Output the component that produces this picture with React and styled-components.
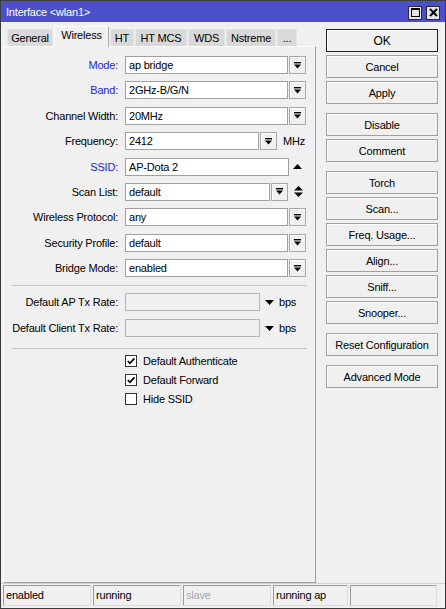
import styled, { createGlobalStyle } from 'styled-components'

const Global = createGlobalStyle`
  html, body { margin: 0; padding: 0; background: #fff; }
  body {
    font-family: 'Liberation Sans', Arial, sans-serif;
    font-size: 11px;
    letter-spacing: -0.2px;
    color: #000;
  }
  * { box-sizing: border-box; }
`

const tabs = [
  { name: 'General', w: 46 },
  { name: 'Wireless', w: 55, active: true },
  { name: 'HT', w: 24 },
  { name: 'HT MCS', w: 52 },
  { name: 'WDS', w: 37 },
  { name: 'Nstreme', w: 50 },
  { name: '...', w: 20 },
]

const buttonGroups = [
  ['OK', 'Cancel', 'Apply'],
  ['Disable', 'Comment'],
  ['Torch', 'Scan...', 'Freq. Usage...', 'Align...', 'Sniff...', 'Snooper...'],
  ['Reset Configuration'],
  ['Advanced Mode'],
]

const DropIcon = () => (
  <svg width="7" height="7" viewBox="0 0 7 7">
    <rect x="0" y="0" width="7" height="1.4" fill="#000" />
    <polygon points="0,2.6 7,2.6 3.5,6.6" fill="#000" />
  </svg>
)

const UpIcon = () => (
  <svg width="9" height="5" viewBox="0 0 9 5">
    <polygon points="0,5 9,5 4.5,0" fill="#000" />
  </svg>
)

const UpDownIcon = () => (
  <svg width="9" height="11" viewBox="0 0 9 11">
    <polygon points="0,4.5 9,4.5 4.5,0" fill="#000" />
    <polygon points="0,6.5 9,6.5 4.5,11" fill="#000" />
  </svg>
)

const DownIcon = () => (
  <svg width="9" height="5" viewBox="0 0 9 5">
    <polygon points="0,0 9,0 4.5,5" fill="#000" />
  </svg>
)

const CheckMark = () => (
  <svg width="10" height="10" viewBox="0 0 10 10">
    <path d="M1.8 5 L4 7.3 L8.4 2.4" stroke="#000" strokeWidth="1.7" fill="none" />
  </svg>
)

const App = () => {
  return (
    <>
      <Global />
      <Window>
        <TitleBar>
          <span>Interface &lt;wlan1&gt;</span>
          <TitleButtons>
            <TitleBtn>
              <svg width="9" height="9" viewBox="0 0 9 9">
                <rect x="0.5" y="0.5" width="8" height="8" fill="none" stroke="#000" />
                <rect x="0" y="0" width="9" height="2" fill="#000" />
              </svg>
            </TitleBtn>
            <TitleBtn>
              <svg width="9" height="9" viewBox="0 0 9 9">
                <path d="M1 1 L8 8 M8 1 L1 8" stroke="#000" strokeWidth="2" />
              </svg>
            </TitleBtn>
          </TitleButtons>
        </TitleBar>

        <Body>
          <LeftCol>
            <TabRow>
              {tabs.map(t => (
                <Tab key={t.name} $w={t.w} $active={t.active}>{t.name}</Tab>
              ))}
            </TabRow>
            <Panel>
              <Rows>
                <Row>
                  <Label $blue>Mode:</Label>
                  <Field $w={163}>ap bridge</Field>
                  <DropBtn><DropIcon /></DropBtn>
                </Row>
                <Row>
                  <Label $blue>Band:</Label>
                  <Field $w={163}>2GHz-B/G/N</Field>
                  <DropBtn><DropIcon /></DropBtn>
                </Row>
                <Row>
                  <Label>Channel Width:</Label>
                  <Field $w={163}>20MHz</Field>
                  <DropBtn><DropIcon /></DropBtn>
                </Row>
                <Row>
                  <Label>Frequency:</Label>
                  <Field $w={134}>2412</Field>
                  <DropBtn><DropIcon /></DropBtn>
                  <Unit $ml={6}>MHz</Unit>
                </Row>
                <Row>
                  <Label $blue>SSID:</Label>
                  <Field $w={164}>AP-Dota 2</Field>
                  <Side><UpIcon /></Side>
                </Row>
                <Row>
                  <Label>Scan List:</Label>
                  <Field $w={145}>default</Field>
                  <DropBtn><DropIcon /></DropBtn>
                  <Side $ml={2}><UpDownIcon /></Side>
                </Row>
                <Row>
                  <Label>Wireless Protocol:</Label>
                  <Field $w={163}>any</Field>
                  <DropBtn><DropIcon /></DropBtn>
                </Row>
                <Row>
                  <Label>Security Profile:</Label>
                  <Field $w={163}>default</Field>
                  <DropBtn><DropIcon /></DropBtn>
                </Row>
                <Row>
                  <Label>Bridge Mode:</Label>
                  <Field $w={163}>enabled</Field>
                  <DropBtn><DropIcon /></DropBtn>
                </Row>
              </Rows>

              <Separator $top={8} $bottom={7} />

              <Rows $gap={8}>
                <Row>
                  <Label>Default AP Tx Rate:</Label>
                  <Field $w={135} $disabled />
                  <Side $w={18}><DownIcon /></Side>
                  <Unit $ml={1}>bps</Unit>
                </Row>
                <Row>
                  <Label>Default Client Tx Rate:</Label>
                  <Field $w={135} $disabled />
                  <Side $w={18}><DownIcon /></Side>
                  <Unit $ml={1}>bps</Unit>
                </Row>
              </Rows>

              <Separator $top={11} $bottom={2} />

              <CheckRow>
                <Box><CheckMark /></Box>Default Authenticate
              </CheckRow>
              <CheckRow>
                <Box><CheckMark /></Box>Default Forward
              </CheckRow>
              <CheckRow>
                <Box />Hide SSID
              </CheckRow>
            </Panel>
          </LeftCol>

          <RightCol>
            {buttonGroups.map((g, i) => (
              <ButtonGroup key={i}>
                {g.map(b => (
                  <Button key={b} $default={b === 'OK'}>{b}</Button>
                ))}
              </ButtonGroup>
            ))}
          </RightCol>
        </Body>

        <StatusBar>
          <Cell $w={88}>enabled</Cell>
          <Cell $w={88}>running</Cell>
          <Cell $w={88} $dim>slave</Cell>
          <Cell $w={75}>running ap</Cell>
          <Cell $w={87} />
        </StatusBar>
      </Window>
    </>
  )
}

const Window = styled.div`
  width: 446px;
  height: 609px;
  border: 1px solid #3c3c3c;
  background: #f0f0f0;
  display: flex;
  flex-direction: column;
`

const TitleBar = styled.div`
  height: 21px;
  background: #4b4fca;
  color: #fff;
  display: flex;
  align-items: center;
  justify-content: space-between;
  padding: 0 5px 0 5px;
`

const TitleButtons = styled.div`
  display: flex;
  gap: 4px;
  margin-top: 2px;
`

const TitleBtn = styled.div`
  width: 14px;
  height: 14px;
  background: #e4e4e4;
  border: 1px solid #2a2a2a;
  display: flex;
  align-items: center;
  justify-content: center;
`

const Body = styled.div`
  flex: 1;
  display: flex;
  padding-top: 4px;
  min-height: 0;
`

const LeftCol = styled.div`
  width: 313px;
  margin-left: 2px;
  display: flex;
  flex-direction: column;
`

const TabRow = styled.div`
  display: flex;
  align-items: flex-end;
  height: 20px;
  padding-left: 4px;
`

const Tab = styled.div`
  width: ${p => p.$w}px;
  height: ${p => (p.$active ? 21 : 17)}px;
  margin-right: 1px;
  margin-bottom: ${p => (p.$active ? -1 : 0)}px;
  padding-bottom: ${p => (p.$active ? 4 : 0)}px;
  display: flex;
  align-items: center;
  justify-content: center;
  background: ${p => (p.$active ? '#f0f0f0' : '#d9d9d9')};
  border: 1px solid ${p => (p.$active ? '#fff' : '#e4e4e4')};
  border-right-color: ${p => (p.$active ? '#a8a8a8' : '#e4e4e4')};
  border-bottom: none;
  position: relative;
  z-index: ${p => (p.$active ? 1 : 0)};
`

const Panel = styled.div`
  flex: 1;
  border: 1px solid #a0a0a0;
  border-top-color: #fff;
  border-left-color: #fff;
  padding-top: 9px;
  display: flex;
  flex-direction: column;
`

const Rows = styled.div`
  display: flex;
  flex-direction: column;
  gap: ${p => p.$gap ?? 7.4}px;
`

const Row = styled.div`
  display: flex;
  align-items: center;
  height: 18px;
`

const Label = styled.div`
  width: 114px;
  margin-right: 7px;
  text-align: right;
  white-space: nowrap;
  color: ${p => (p.$blue ? '#2424d6' : '#000')};
`

const Field = styled.div`
  width: ${p => p.$w}px;
  height: 18px;
  line-height: 16px;
  padding-left: 3px;
  background: ${p => (p.$disabled ? '#f0f0f0' : '#fff')};
  border: 1px solid ${p => (p.$disabled ? '#b4b4b4' : '#a0a0a0')};
  white-space: nowrap;
  overflow: hidden;
`

const DropBtn = styled.div`
  width: 17px;
  height: 18px;
  margin-left: 1px;
  border: 1px solid #a8a8a8;
  background: #f0f0f0;
  box-shadow: inset 1px 1px 0 #fff;
  display: flex;
  align-items: center;
  justify-content: center;
`

const Side = styled.div`
  width: ${p => p.$w ?? 17}px;
  margin-left: ${p => p.$ml ?? 0}px;
  display: flex;
  align-items: center;
  justify-content: center;
`

const Unit = styled.span`
  margin-left: ${p => p.$ml}px;
`

const Separator = styled.div`
  width: 295px;
  margin: ${p => p.$top}px 0 ${p => p.$bottom}px 8px;
  border-top: 1px solid #c4c4c4;
`

const CheckRow = styled.div`
  display: flex;
  align-items: center;
  height: 19px;
  padding-left: 121px;
`

const Box = styled.div`
  width: 12px;
  height: 12px;
  margin-right: 6px;
  background: #fff;
  border: 1px solid #333;
  display: flex;
  align-items: center;
  justify-content: center;
`

const RightCol = styled.div`
  width: 112px;
  margin-left: 10px;
  padding-top: 3px;
  display: flex;
  flex-direction: column;
  gap: 9px;
`

const ButtonGroup = styled.div`
  display: flex;
  flex-direction: column;
  gap: 3px;
`

const Button = styled.div`
  height: 23px;
  display: flex;
  align-items: center;
  justify-content: center;
  background: #f0f0f0;
  border: 1px solid ${p => (p.$default ? '#1e1e1e' : '#a0a0a0')};
  box-shadow: inset 1px 1px 0 #fff;
  font-size: ${p => (p.$default ? 12 : 11)}px;
`

const StatusBar = styled.div`
  height: 25px;
  border-top: 1px solid #d2d2d2;
  padding: 1px 2px 2px 2px;
  display: flex;
  gap: 2px;
`

const Cell = styled.div`
  width: ${p => p.$w}px;
  height: 21px;
  line-height: 19px;
  padding-left: 2px;
  border: 1px solid #dcdcdc;
  border-top-color: #9c9c9c;
  border-left-color: #9c9c9c;
  color: ${p => (p.$dim ? '#a8a8a8' : '#000')};
  white-space: nowrap;
`

export default App
